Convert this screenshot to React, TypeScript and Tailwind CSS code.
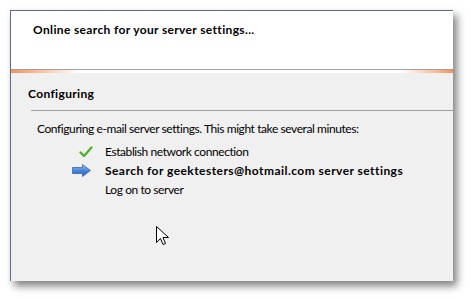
import React from "react";

const font = { fontFamily: 'Lato, "Noto Sans", sans-serif' };

function Check() {
  return (
    <svg width="14" height="12" viewBox="0 0 14 12">
      <path d="M1.5 6.5 L5 10 L12.5 1.5" fill="none" stroke="#4caf2a" strokeWidth="2.2" strokeLinecap="round" strokeLinejoin="round" />
    </svg>
  );
}

function Arrow() {
  return (
    <svg width="19" height="13" viewBox="0 0 19 13">
      <defs>
        <linearGradient id="ag" x1="0" y1="0" x2="0" y2="1">
          <stop offset="0" stopColor="#9cc4f4" />
          <stop offset="0.5" stopColor="#4a86dc" />
          <stop offset="1" stopColor="#2a5cb0" />
        </linearGradient>
      </defs>
      <path d="M0.5 3.5 H10.5 V0.5 L18.5 6.5 L10.5 12.5 V9.5 H0.5 Z" fill="url(#ag)" stroke="#3a64a8" strokeWidth="0.8" strokeLinejoin="round" />
    </svg>
  );
}

function Cursor() {
  return (
    <svg width="13" height="21" viewBox="0 0 13 21">
      <path d="M0.5 0.5 V16.5 L4.5 12.5 L7 18.5 L9.5 17.5 L7 11.5 H12.5 Z" fill="#ffffff" stroke="#000000" strokeWidth="1" strokeLinejoin="miter" />
    </svg>
  );
}

export default function App() {
  return (
    <div className="w-[471px] h-[299px] bg-white overflow-hidden pt-[10px] pl-[10px]" style={font}>
      <div className="w-[443px] h-[271px] flex flex-col border-t border-l border-[#5d6c88] shadow-[4px_5px_8px_rgba(0,0,0,0.5)] bg-[#f0f0f0]">
        <div className="h-[58px] bg-white flex items-start pl-[22px] pt-[11px]">
          <span className="text-[12px] tracking-[0.35px] font-bold text-black leading-[16px]">Online search for your server settings...</span>
        </div>
        <div className="h-px bg-[#a0a0a0]" />
        <div className="h-[3px] bg-[linear-gradient(to_right,#f6905a_0px,#fac0a0_30px,#ffffff_68px,#ffffff_390px,#fac0a0_422px,#f6905a_442px)]" />
        <div className="flex flex-col flex-1 relative">
          <div className="pl-[17px] pt-[13px] text-[12px] tracking-[0.35px] font-bold text-black leading-[16px]">Configuring</div>
          <div className="ml-[20px] mt-[8px] h-px bg-[#a0a0a0]" />
          <div className="pl-[26px] pt-[10px] text-[12px] tracking-[-0.42px] text-black leading-[16px]">
            Configuring e-mail server settings. This might take several minutes:
          </div>
          <div className="flex flex-col mt-[5px] text-[12px] tracking-[-0.42px] text-black leading-[16px]">
            <div className="flex items-center h-[19px]">
              <div className="w-[94px] flex justify-end pr-[12px]"><Check /></div>
              <span>Establish network connection</span>
            </div>
            <div className="flex items-center h-[19px]">
              <div className="w-[94px] flex justify-end pr-[14px]"><Arrow /></div>
              <span className="font-bold tracking-[0.45px]">Search for geektesters@hotmail.com server settings</span>
            </div>
            <div className="flex items-center h-[19px]">
              <div className="w-[94px]" />
              <span>Log on to server</span>
            </div>
          </div>
          <div className="absolute left-[145px] top-[153px]"><Cursor /></div>
        </div>
      </div>
    </div>
  );
}
